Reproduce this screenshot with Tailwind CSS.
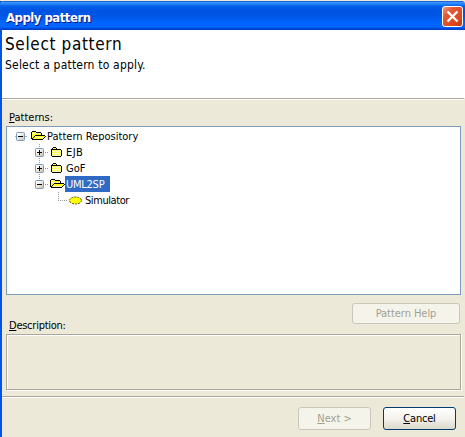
<!DOCTYPE html>
<html lang="en">
<head>
<meta charset="utf-8">
<title>Apply pattern</title>
<script src="https://cdn.jsdelivr.net/npm/@tailwindcss/browser@4"></script>
</head>
<body class="w-[465px] h-[437px] overflow-hidden bg-[#ece9d8] pt-px text-black text-[11px] leading-4 font-['DejaVu_Sans_Condensed','DejaVu_Sans',sans-serif] [font-stretch:condensed]">
<svg width="0" height="0" class="absolute">
  <defs>
    <linearGradient id="face" x2="1" y2="1"><stop offset=".2" stop-color="#fff"/><stop offset="1" stop-color="#c5bdae"/></linearGradient>
    <g id="box"><rect x=".5" y=".5" width="8" height="8" rx="1" fill="url(#face)" stroke="#7b9ab8"/><path d="M2 4h5v1H2z" fill="#000"/></g>
    <g id="open" shape-rendering="crispEdges"><path fill="#ffff20" d="M1 1h4v1h5v3h4v1l-3 3H2L1 8z"/><path stroke="#fffbb8" stroke-dasharray="1 1" d="M2 1.5h3M1 2.5h9M2 3.5h8M5 6.5h8M4 7.5h8"/><path fill="#000" d="M1 0h4v1H1zM0 1h1v7H0zM5 1h5v1H5zM10 2h1v2h-1zM4 4h10v1H4zM3 5h1v1H3zM2 6h1v1H2zM1 7h1v1H1zM14 5h1v1h-1zM13 6h1v1h-1zM12 7h1v1h-1zM1 8h11v1H1z"/></g>
    <g id="closed" shape-rendering="crispEdges"><path fill="#ffff50" d="M2 1h3v1H2zM1 2h9v7H1z"/><path stroke="#fffbc8" stroke-dasharray="1 1" d="M2 3.5h8M1 4.5h9M2 5.5h8M1 6.5h9M2 7.5h8M1 8.5h9"/><path fill="#000" d="M2 0h3v1H2zM1 1h1v1H1zM5 1h1v1H5zM1 2h9v1H1zM0 2h1v7H0zM10 3h1v6h-1zM1 9h9v1H1z"/></g>
  </defs>
</svg>
<div class="h-[436px] flex flex-col border-l-2 border-[#0054e3]">
  <header class="-ml-0.5 h-[29px] shrink-0 flex items-center justify-between pl-1.5 pr-0.5 rounded-tl-[4px] rounded-tr-[3px] bg-[linear-gradient(180deg,#0a50c8_0,#3a93ff_1.5px,#2585fa_3px,#0561e8_5px,#0054e3_9px,#0055e5_15px,#0066ff_22px,#0066ff_26px,#0043cf_28px,#003ac0_29px)]">
    <h1 class="pt-1 text-[13px] font-bold text-white whitespace-nowrap tracking-[-0.5px] [text-shadow:1px_1px_0_#0a1883]">Apply pattern</h1>
    <svg class="mt-[2px]" width="21" height="21" viewBox="0 0 21 21"><defs><linearGradient id="red" x2="1" y2="1"><stop stop-color="#f0a084"/><stop offset=".3" stop-color="#e35a36"/><stop offset=".75" stop-color="#dc451b"/><stop offset="1" stop-color="#b83311"/></linearGradient></defs><rect x=".5" y=".5" width="20" height="20" rx="2.5" fill="url(#red)" stroke="#fff"/><path d="M5.5 5.5l10 10M15.5 5.5l-10 10" stroke="#fff" stroke-width="2.3"/></svg>
  </header>
  <section class="h-[68px] shrink-0 bg-white pl-[3px] pt-1">
    <h2 class="text-[17px] leading-5 tracking-[0.65px]">Select pattern</h2>
    <p class="pt-px text-[12px] leading-5 tracking-[0.2px]">Select a pattern to apply.</p>
  </section>
  <div class="h-0.5 shrink-0 mr-px border-t border-[#aca899] bg-white"></div>
  <main class="h-[296px] shrink-0 pl-1 pr-1 flex flex-col">
    <div class="h-[26px] pt-[10px] pl-[3px]"><u>P</u>atterns:</div>
    <div class="h-[169px] border border-[#7f9db9] bg-white pt-px pl-2">
      <div class="flex h-4 items-center">
        <svg width="32" height="16"><path d="M0 8.5h1M10 8.5h2" stroke="#aaa"/><use href="#box" x="1" y="4"/><use href="#open" x="16" y="3"/></svg>
        <span class="pt-0.5">Pattern Repository</span>
      </div>
      <div class="flex h-4 items-center">
        <svg width="51" height="16"><path d="M24.5 0v16M30 8.5h3" stroke="#999" stroke-dasharray="1 1"/><use href="#box" x="20" y="4"/><path d="M24 6h1v5h-1z"/><use href="#closed" x="36" y="3"/></svg>
        <span class="pt-0.5 tracking-[0.4px]">EJB</span>
      </div>
      <div class="flex h-4 items-center">
        <svg width="51" height="16"><path d="M24.5 0v16M30 8.5h3" stroke="#999" stroke-dasharray="1 1"/><use href="#box" x="20" y="4"/><path d="M24 6h1v5h-1z"/><use href="#closed" x="36" y="3"/></svg>
        <span class="pt-0.5">GoF</span>
      </div>
      <div class="flex h-4 items-center">
        <svg width="50" height="16"><path d="M24.5 0v5M30 8.5h3" stroke="#999" stroke-dasharray="1 1"/><use href="#box" x="20" y="4"/><use href="#open" x="35" y="3"/></svg>
        <span class="w-[45px] h-4 leading-[17px] bg-[#316ac5] text-white pl-px whitespace-nowrap tracking-[-0.25px]">UML2SP</span>
      </div>
      <div class="flex h-4 items-center">
        <svg width="70" height="16"><path d="M43.5 0v8M43 8.5h9" stroke="#999" stroke-dasharray="1 1"/><ellipse cx="60.5" cy="8.5" rx="6" ry="3.5" fill="#ff0" stroke="#554f00" stroke-dasharray="2 1"/></svg>
        <span class="pt-0.5 tracking-[-0.42px]">Simulator</span>
      </div>
    </div>
    <div class="h-[39px] flex justify-between">
      <div class="pl-[3px] pt-[23px] tracking-[-0.25px]"><u>D</u>escription:</div>
      <button disabled class="mt-2 mr-px w-[108px] h-[21px] rounded-[3px] border border-[#c9c7ba] bg-[#f5f4ea] pt-px text-[#a1a192] text-center tracking-[-0.05px]">Pattern Help</button>
    </div>
    <div class="h-[56px] border border-[#aca899] shadow-[inset_1px_1px_0_#fff,1px_1px_0_#fff]"></div>
  </main>
  <div class="h-0.5 shrink-0 mr-px border-t border-[#aca899] bg-white"></div>
  <footer class="flex justify-end gap-3 pt-[9px] pr-[9px]">
    <button disabled class="w-[73px] h-[23px] rounded-[3px] border border-[#c9c7ba] bg-[#f5f4ea] pt-px text-[#a1a192]"><u>N</u>ext &gt;</button>
    <button class="w-[73px] h-[23px] rounded-[3px] border border-[#003c74] bg-linear-to-b from-white via-[#f3f2ec] to-[#dcd8cb] pt-px tracking-[-0.2px]"><u>C</u>ancel</button>
  </footer>
</div>
</body>
</html></script>
